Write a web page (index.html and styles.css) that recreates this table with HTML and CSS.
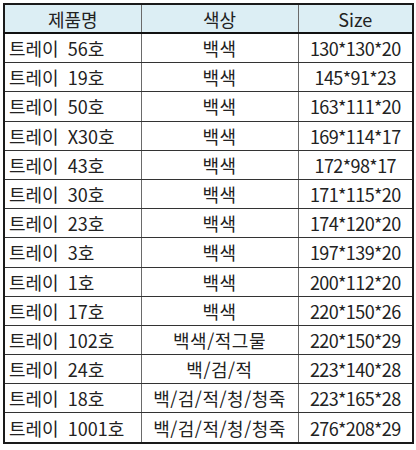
FILE: index.html
```html
<!DOCTYPE html>
<html lang="ko">
<head>
<meta charset="utf-8">
<link rel="stylesheet" href="styles.css">
</head>
<body>
<table class="spec">
  <colgroup>
    <col class="c1"><col class="c2"><col class="c3">
  </colgroup>
  <thead>
    <tr><th>제품명</th><th>색상</th><th>Size</th></tr>
  </thead>
  <tbody>
    <tr><td class="name">트레이 56호</td><td class="color">백색</td><td class="size">130*130*20</td></tr>
    <tr><td class="name">트레이 19호</td><td class="color">백색</td><td class="size">145*91*23</td></tr>
    <tr><td class="name">트레이 50호</td><td class="color">백색</td><td class="size">163*111*20</td></tr>
    <tr><td class="name">트레이 X30호</td><td class="color">백색</td><td class="size">169*114*17</td></tr>
    <tr><td class="name">트레이 43호</td><td class="color">백색</td><td class="size">172*98*17</td></tr>
    <tr><td class="name">트레이 30호</td><td class="color">백색</td><td class="size">171*115*20</td></tr>
    <tr><td class="name">트레이 23호</td><td class="color">백색</td><td class="size">174*120*20</td></tr>
    <tr><td class="name">트레이 3호</td><td class="color">백색</td><td class="size">197*139*20</td></tr>
    <tr><td class="name">트레이 1호</td><td class="color">백색</td><td class="size">200*112*20</td></tr>
    <tr><td class="name">트레이 17호</td><td class="color">백색</td><td class="size">220*150*26</td></tr>
    <tr><td class="name">트레이 102호</td><td class="color">백색/적그물</td><td class="size">220*150*29</td></tr>
    <tr><td class="name">트레이 24호</td><td class="color">백/검/적</td><td class="size">223*140*28</td></tr>
    <tr><td class="name">트레이 18호</td><td class="color">백/검/적/청/청죽</td><td class="size">223*165*28</td></tr>
    <tr><td class="name">트레이 1001호</td><td class="color">백/검/적/청/청죽</td><td class="size">276*208*29</td></tr>
  </tbody>
</table>
</body>
</html>
```
FILE: styles.css
```css
html, body {
  margin: 0;
  padding: 0;
  background: #ffffff;
}
body {
  padding: 3px 4px 0 3px;
  font-family: "Noto Sans CJK KR", "Noto Sans", sans-serif;
  color: #222222;
}
.spec {
  border-collapse: collapse;
  width: 409px;
  border: 2px solid #1a1a1a;
  font-size: 18px;
  table-layout: fixed;
}
.c1 { width: 137px; }
.c2 { width: 157px; }
.c3 { width: 115px; }
.spec th, .spec td {
  height: 28.2px;
  padding: 0 4px;
  line-height: 20px;
  white-space: nowrap;
  overflow: visible;
  border-left: 1px solid #6a6a6a;
  border-right: 1px solid #6a6a6a;
  border-top: 1px solid #333333;
  border-bottom: 1px solid #333333;
  font-weight: normal;
}
.spec thead th {
  background: #dceef4;
  text-align: center;
  border-bottom: 2px solid #111111;
  height: 27px;
}
.name { text-align: left; word-spacing: 4px; }
.color { text-align: center; letter-spacing: 0.5px; }
.size { text-align: center; padding: 0 2px; letter-spacing: -0.6px; }
```
